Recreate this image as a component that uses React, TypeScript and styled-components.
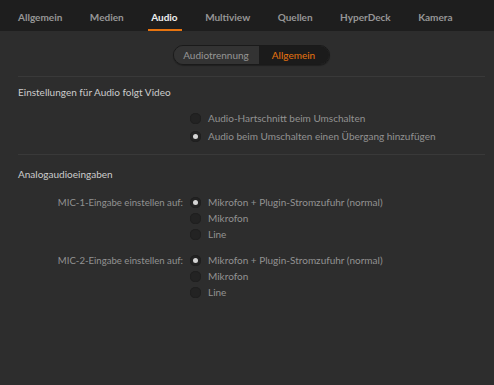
import styled, { createGlobalStyle } from "styled-components";

const GlobalStyle = createGlobalStyle`
  html, body {
    margin: 0;
    padding: 0;
    background: #2d2d2d;
  }
  body {
    font-family: Lato, "Open Sans", sans-serif;
  }
`;

const Page = styled.div`
  width: 494px;
  height: 385px;
  background: #2d2d2d;
  display: flex;
  flex-direction: column;
  overflow: hidden;
`;

const TabBar = styled.nav`
  height: 31px;
  background: #1e1e1e;
  display: flex;
  align-items: stretch;
  gap: 27.5px;
  padding-left: 18px;
  box-sizing: border-box;
`;

const Tab = styled.div<{ $active?: boolean }>`
  position: relative;
  display: flex;
  align-items: center;
  font-size: 10px;
  font-weight: 700;
  color: ${(p) => (p.$active ? "#eeeeee" : "#969696")};
  padding-top: 2px;
  &::after {
    content: "";
    display: ${(p) => (p.$active ? "block" : "none")};
    position: absolute;
    left: -3px;
    right: -4px;
    bottom: 0;
    height: 2px;
    background: #e8740f;
  }
`;

const SegmentWrap = styled.div`
  display: flex;
  justify-content: center;
  margin-top: 14px;
  padding-left: 8px;
`;

const Segmented = styled.div`
  display: flex;
  height: 20px;
  border-radius: 10px;
  border: 1px solid #1a1a1a;
  overflow: hidden;
  box-sizing: border-box;
  box-shadow: 0 1px 1px rgba(0, 0, 0, 0.3);
`;

const Segment = styled.div<{ $active?: boolean }>`
  display: flex;
  align-items: center;
  justify-content: center;
  width: ${(p) => (p.$active ? "70px" : "85px")};
  font-size: 10px;
  color: ${(p) => (p.$active ? "#e8740f" : "#969696")};
  background: ${(p) => (p.$active ? "#1b1b1b" : "#333333")};
`;

const Divider = styled.hr<{ $top: number }>`
  border: none;
  height: 1px;
  background: #393939;
  margin: ${(p) => p.$top}px 9px 0 18px;
`;

const SectionTitle = styled.div<{ $top: number }>`
  margin-top: ${(p) => p.$top}px;
  padding-left: 18px;
  font-size: 10px;
  line-height: 14px;
  color: #cccccc;
`;

const OptionGrid = styled.div<{ $top: number; $row: number }>`
  display: grid;
  grid-template-columns: 165px auto;
  column-gap: 7px;
  grid-auto-rows: ${(p) => p.$row}px;
  margin-top: ${(p) => p.$top}px;
  padding-left: 18px;
`;

const FieldLabel = styled.div`
  font-size: 9.6px;
  color: #929292;
  display: flex;
  align-items: center;
  justify-content: flex-end;
`;

const RadioRow = styled.label`
  display: flex;
  align-items: center;
  gap: 7px;
  font-size: 10px;
  color: #929292;
`;

const RadioDot = styled.span<{ $checked?: boolean }>`
  width: 11px;
  height: 11px;
  border-radius: 50%;
  background: #232323;
  box-shadow: inset 0 0 1px rgba(0, 0, 0, 0.6);
  display: flex;
  align-items: center;
  justify-content: center;
  &::after {
    content: "";
    display: ${(p) => (p.$checked ? "block" : "none")};
    width: 5px;
    height: 5px;
    border-radius: 50%;
    background: #d4d4d4;
  }
`;

const tabs = ["Allgemein", "Medien", "Audio", "Multiview", "Quellen", "HyperDeck", "Kamera"];

interface IOption {
  label: string;
  checked?: boolean;
}

function RadioGroup({ label, options }: { label?: string; options: IOption[] }) {
  return (
    <>
      {options.flatMap((opt, i) => [
        <FieldLabel key={"l" + i}>{i === 0 ? label : ""}</FieldLabel>,
        <RadioRow key={"r" + i}>
          <RadioDot $checked={opt.checked} />
          {opt.label}
        </RadioRow>,
      ])}
    </>
  );
}

const micOptions: IOption[] = [
  { label: "Mikrofon + Plugin-Stromzufuhr (normal)", checked: true },
  { label: "Mikrofon" },
  { label: "Line" },
];

export default function App() {
  return (
    <Page>
      <GlobalStyle />
      <TabBar>
        {tabs.map((t) => (
          <Tab key={t} $active={t === "Audio"}>
            {t}
          </Tab>
        ))}
      </TabBar>
      <SegmentWrap>
        <Segmented>
          <Segment>Audiotrennung</Segment>
          <Segment $active>Allgemein</Segment>
        </Segmented>
      </SegmentWrap>
      <Divider $top={11} />
      <SectionTitle $top={8}>Einstellungen für Audio folgt Video</SectionTitle>
      <OptionGrid $top={10} $row={18}>
        <RadioGroup
          options={[
            { label: "Audio-Hartschnitt beim Umschalten" },
            { label: "Audio beim Umschalten einen Übergang hinzufügen", checked: true },
          ]}
        />
      </OptionGrid>
      <Divider $top={9} />
      <SectionTitle $top={12}>Analogaudioeingaben</SectionTitle>
      <OptionGrid $top={13} $row={16}>
        <RadioGroup label="MIC-1-Eingabe einstellen auf:" options={micOptions} />
      </OptionGrid>
      <OptionGrid $top={10} $row={16}>
        <RadioGroup label="MIC-2-Eingabe einstellen auf:" options={micOptions} />
      </OptionGrid>
    </Page>
  );
}
